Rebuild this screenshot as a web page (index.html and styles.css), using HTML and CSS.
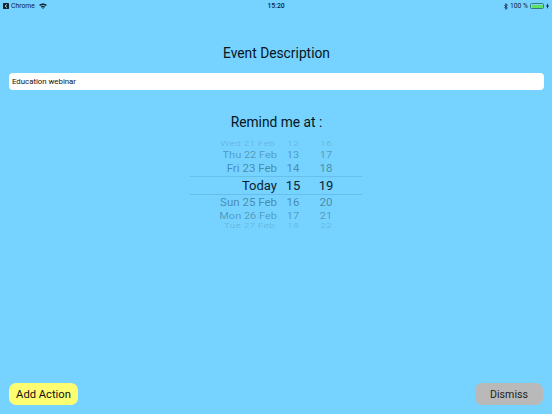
FILE: index.html
```html
<!DOCTYPE html>
<html lang="en">
<head>
<meta charset="utf-8">
<title>Event</title>
<link rel="stylesheet" href="styles.css">
</head>
<body>
<div class="screen">
  <header class="status">
    <div class="status-side">
      <svg class="back-icon" width="6" height="6" viewBox="0 0 7 7"><rect width="7" height="7" rx="1" fill="#123"/><path d="M4.6 1.6 2.4 3.5l2.2 1.9" fill="none" stroke="#cfe" stroke-width="1"/></svg>
      <span>Chrome</span>
      <svg class="wifi" width="8" height="6" viewBox="0 0 9 7"><path d="M0 2.4C2.5 0 6.5 0 9 2.4L7.9 3.6C6 1.8 3 1.8 1.1 3.6Z M2 4.3C3.4 3 5.6 3 7 4.3L5.9 5.4C5.1 4.7 3.9 4.7 3.1 5.4Z M3.7 6 4.5 5.3 5.3 6 4.5 6.9Z" fill="#123"/></svg>
    </div>
    <div class="clock">15:20</div>
    <div class="status-side status-right">
      <svg width="4" height="7" viewBox="0 0 4 7"><path d="M.3 1.8 3.4 4.9 1.9 6.4V.6L3.4 2.1.3 5.2" fill="none" stroke="#123" stroke-width=".8"/></svg>
      <span>100 %</span>
      <span class="battery"><span class="battery-fill"></span></span>
      <svg width="3" height="6" viewBox="0 0 3 6"><path d="M2 0 0 3.4h1.1L1 6l2-3.4H1.8Z" fill="#123"/></svg>
    </div>
  </header>

  <main class="content">
    <h1 class="heading">Event Description</h1>
    <div class="field">Education webinar</div>
    <h2 class="heading heading-remind">Remind me at :</h2>
    <div class="picker">
      <div class="row r-far"><span>Wed 21 Feb</span><span>12</span><span>16</span></div>
      <div class="row r-mid"><span>Thu 22 Feb</span><span>13</span><span>17</span></div>
      <div class="row r-near"><span>Fri 23 Feb</span><span>14</span><span>18</span></div>
      <div class="row r-current"><span>Today</span><span>15</span><span>19</span></div>
      <div class="row r-near r-below"><span>Sun 25 Feb</span><span>16</span><span>20</span></div>
      <div class="row r-mid"><span>Mon 26 Feb</span><span>17</span><span>21</span></div>
      <div class="row r-far"><span>Tue 27 Feb</span><span>18</span><span>22</span></div>
    </div>
  </main>

  <footer class="actions">
    <button class="btn btn-add">Add Action</button>
    <button class="btn btn-dismiss">Dismiss</button>
  </footer>
</div>
</body>
</html>
```
FILE: styles.css
```css
* { box-sizing: border-box; margin: 0; padding: 0; }
html, body { width: 552px; height: 414px; overflow: hidden; }
body { background: #76d3ff; font-family: Roboto, "Liberation Sans", sans-serif; color: #0a1a24; }
.screen { width: 552px; height: 414px; display: flex; flex-direction: column; }
.status { height: 12px; padding: 0 3px; display: flex; justify-content: space-between; align-items: center; font-size: 6.8px; color: #123; position: relative; }
.status-side { display: flex; align-items: center; gap: 2px; }
.clock { position: absolute; left: 0; right: 0; text-align: center; font-weight: 500; }
.wifi { margin-left: 2px; }
.battery { width: 14px; height: 6px; border: 0.5px solid #3a7a80; border-radius: 1.5px; padding: .5px; display: flex; }
.battery-fill { flex: 1; background: #5fe05f; border-radius: 1px; }
.content { flex: 1; display: flex; flex-direction: column; padding: 0 8px 0 9px; }
.heading { font-size: 13.8px; font-weight: 400; line-height: 18px; text-align: center; color: #06141c; }
.heading:first-child { margin-top: 32px; }
.field { margin-top: 11px; height: 17px; background: #fff; border-radius: 4px; font-size: 7.8px; line-height: 17px; padding-left: 3px; color: #111; }
.heading-remind { margin-top: 23px; }
.picker { margin-top: 9px; width: 172px; margin-left: 181px; display: flex; flex-direction: column; }
.row { display: grid; grid-template-columns: 87px 32px 34px; align-items: center; text-align: center; }
.row span:first-child { text-align: right; }
.r-far { height: 8px; line-height: 8px; font-size: 10.5px; color: rgba(30,70,90,.2); }
.r-far span { transform: scaleY(.6); }
.r-far span:first-child { padding-right: 2px; }
.r-mid { height: 13px; line-height: 13px; font-size: 11px; color: rgba(30,70,90,.42); }
.r-mid span { transform: scaleY(.88); }
.r-near { height: 15px; line-height: 15px; font-size: 11.5px; color: rgba(30,70,90,.52); }
.r-below { height: 14px; line-height: 14px; }
.r-current { height: 19px; line-height: 17px; font-size: 13px; color: #0a2233; border-top: 1px solid rgba(30,90,120,.16); border-bottom: 1px solid rgba(30,90,120,.16); }
.actions { display: flex; justify-content: space-between; padding: 0 9px 9px; }
.btn { width: 69px; height: 22px; border: 0; border-radius: 7px; font: inherit; font-size: 11.2px; color: #111; }
.btn-add { background: #fdfd72; }
.btn-dismiss { width: 68px; background: #b9b9b9; color: #222; font-size: 10.6px; }
```
